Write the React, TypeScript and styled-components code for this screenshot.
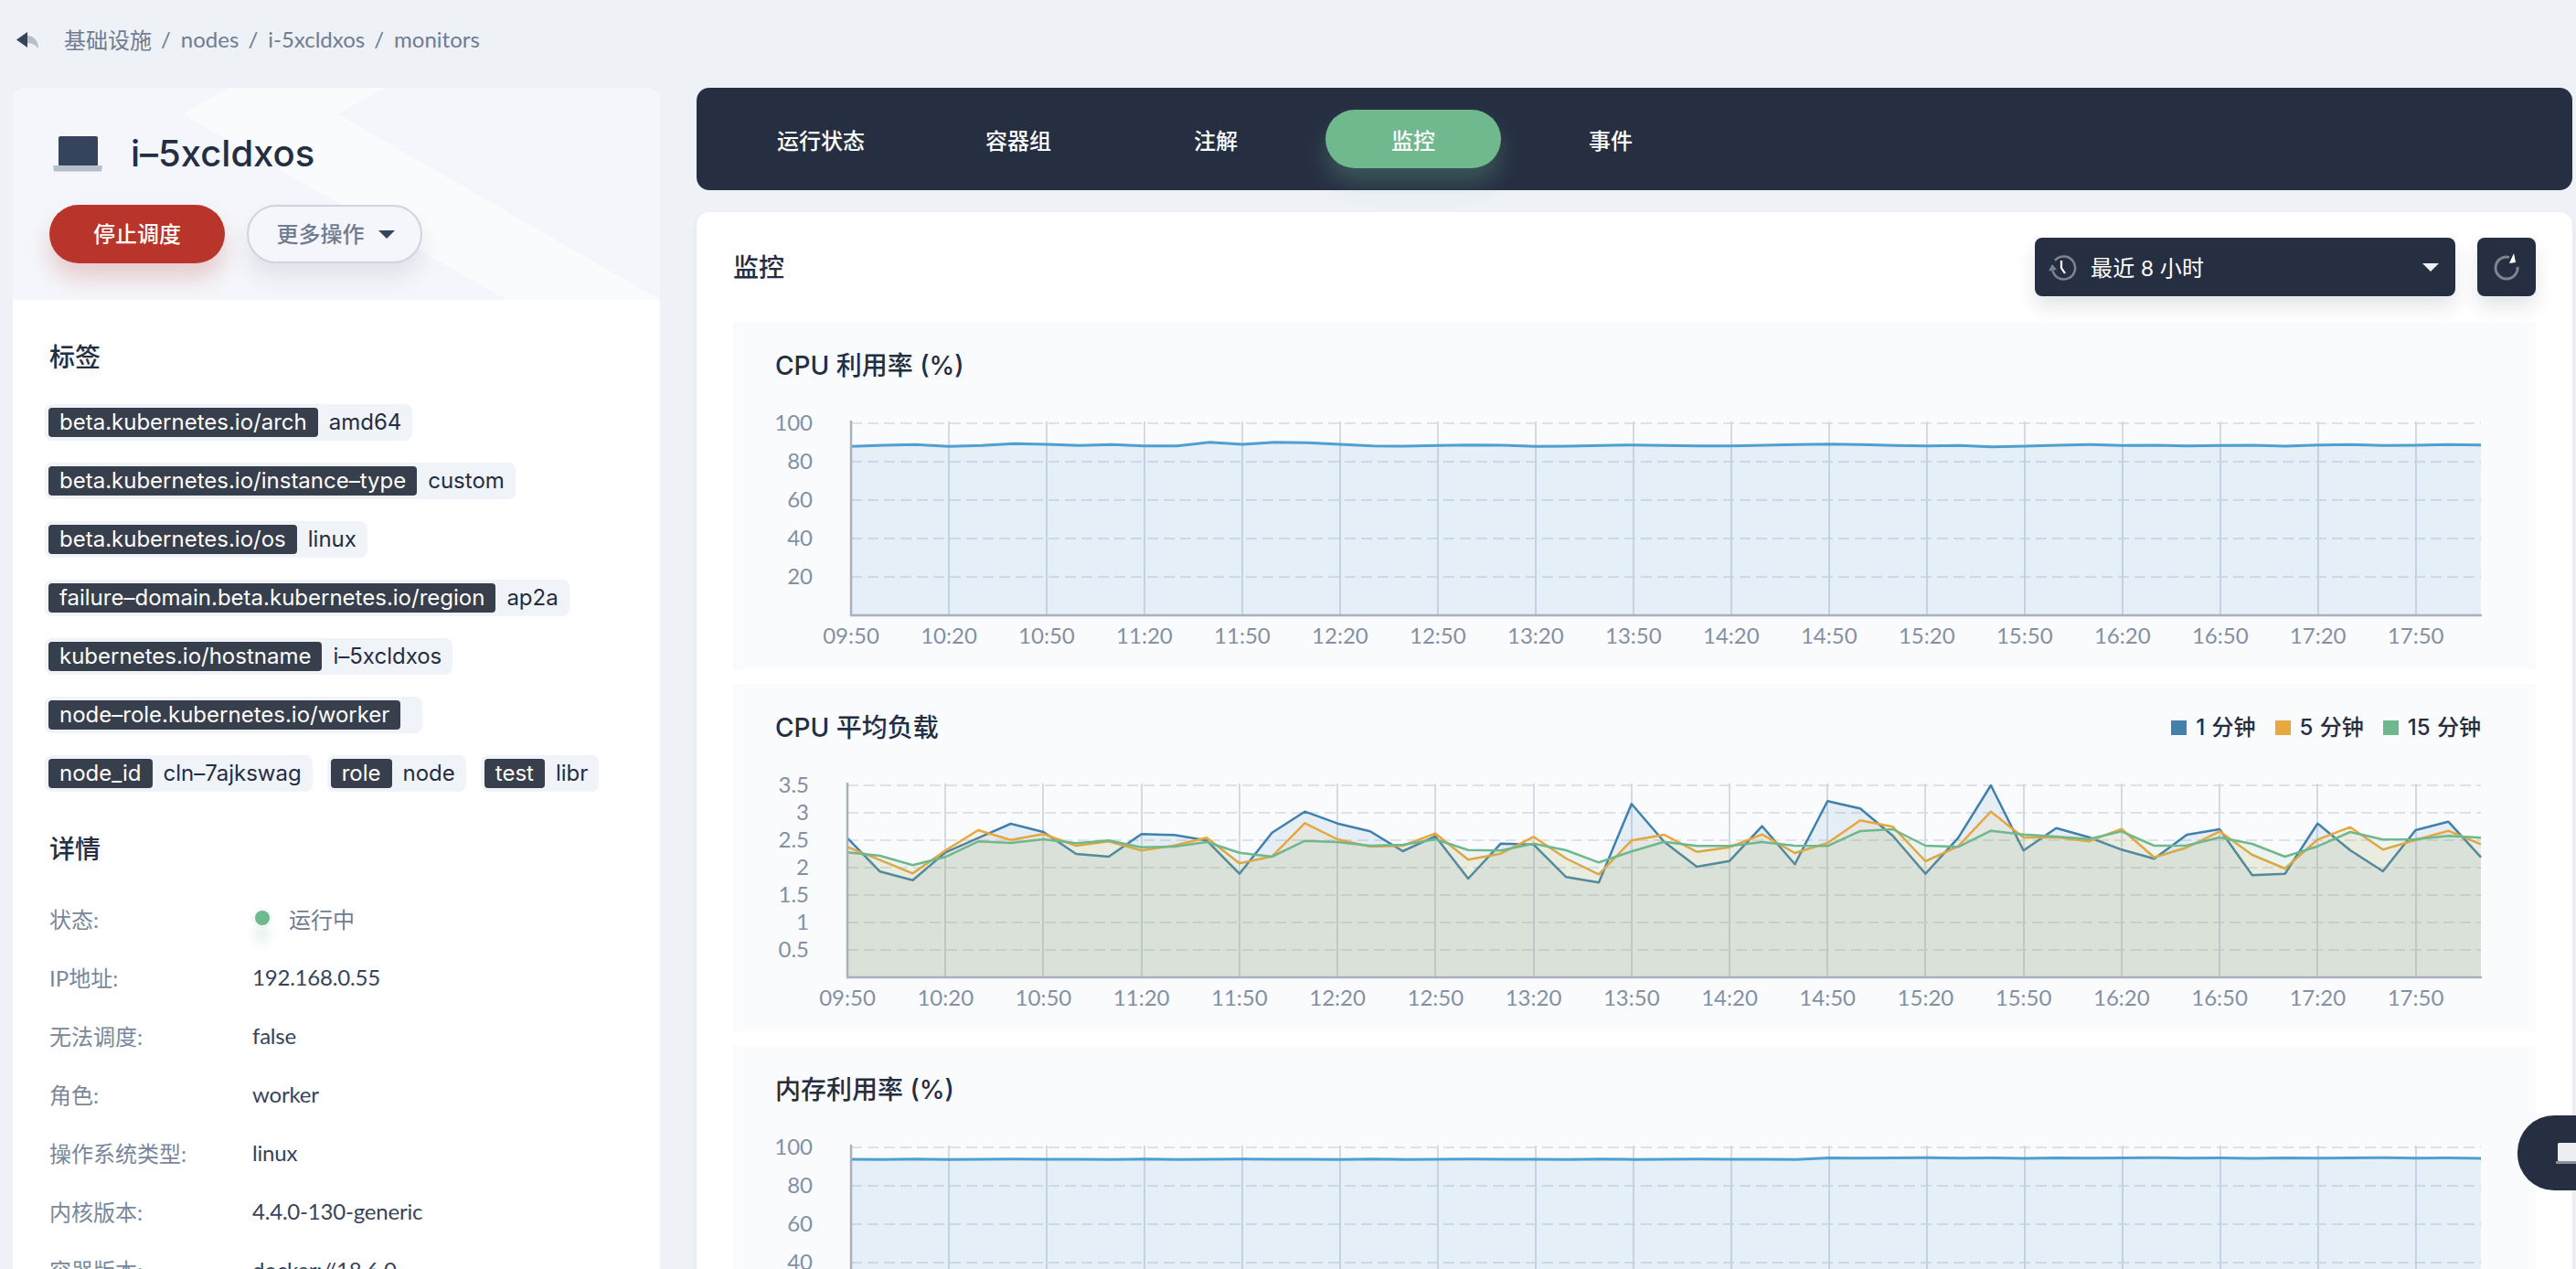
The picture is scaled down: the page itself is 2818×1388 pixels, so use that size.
import React from "react";
import styled, { createGlobalStyle } from "styled-components";

const CJK = `"Noto Sans CJK SC"`;
const BASE = `Lato, ${CJK}, sans-serif`;
const UI = `Inter, ${CJK}, sans-serif`;

const Global = createGlobalStyle`
  html, body { margin: 0; padding: 0; width: 2818px; height: 1388px; overflow: hidden; background: #eef1f6; }
  #root { width: 2818px; height: 1388px; overflow: hidden; }
  * { box-sizing: border-box; }
`;

const Page = styled.div`
  width: 2818px; height: 1388px; overflow: hidden; position: relative;
  font-family: ${BASE}; font-size: 24px; color: #242e42;
`;
const Crumbs = styled.div`
  height: 96px; padding: 0 0 11px 18px; display: flex; align-items: center;
  color: #6f7c92; font-size: 24px;
`;
const BackIcon = styled.svg`width: 24px; height: 18px; margin: 3px 28px 0 0; flex: none;`;
const CrumbSep = styled.span`margin: 0 11px 0 10px;`;
const Columns = styled.div`display: flex; gap: 40px; padding-left: 14px; align-items: flex-start;`;

const Side = styled.aside`width: 708px; flex: none; background: #fff; border-radius: 14px 14px 0 0; overflow: hidden;`;
const SideHead = styled.div`
  height: 232px; background: #f4f6fb; padding: 44px 0 0 40px; position: relative;
  &::before {
    content: ""; position: absolute; inset: 0; background: #fafbfd;
    clip-path: polygon(236px 0, 406px 0, 356px 29px, 708px 232px, 540px 232px, 186px 29px);
  }
  & > * { position: relative; }
`;
const TitleRow = styled.div`display: flex; align-items: center; height: 56px; margin-left: 3px;`;
const LaptopIcon = styled.svg`width: 56px; height: 56px; flex: none; margin-right: 30px;`;
const NodeName = styled.h1`margin: 0; font: 500 40px/56px ${UI}; color: #242e42;`;
const Actions = styled.div`display: flex; gap: 24px; margin-top: 28px;`;
const Pill = styled.button<{ $danger?: boolean }>`
  width: 192px; height: 64px; border-radius: 32px; font: 500 24px/1 ${BASE};
  display: flex; align-items: center; justify-content: center; gap: 15px;
  padding: ${(p) => (p.$danger ? "0" : "0 0 0 2px")};
  background: ${(p) => (p.$danger ? "#b9342a" : "#f4f6fb")};
  color: ${(p) => (p.$danger ? "#fff" : "#6f7c92")};
  border: ${(p) => (p.$danger ? "none" : "2px solid #cfd5de")};
  box-shadow: ${(p) => (p.$danger ? "0 16px 24px rgba(185,52,42,.22)" : "0 16px 24px rgba(36,46,66,.09)")};
`;
const Caret = styled.i<{ $color: string }>`
  width: 0; height: 0; display: block; flex: none;
  border-left: 9px solid transparent; border-right: 9px solid transparent;
  border-top: 9px solid ${(p) => p.$color};
`;
const SideBody = styled.div`padding: 42px 0 0 35px;`;
const SectionTitle = styled.h3<{ $gap?: number }>`
  margin: ${(p) => p.$gap ?? 0}px 0 0 5px; font: 500 28px/40px ${BASE}; color: #242e42;
  text-shadow: 0 4px 8px rgba(36,46,66,.08);
`;
const TagList = styled.div`display: flex; flex-direction: column; gap: 24px; margin-top: 32px;`;
const TagRow = styled.div`display: flex; gap: 16px;`;
const Tag = styled.div`
  display: flex; height: 40px; padding: 4px 0 4px 4px; background: #f0f3f8; border-radius: 8px;
  font: 400 24px/32px ${UI};
`;
const TagKey = styled.span`background: #373e4c; color: #fff; border-radius: 4px; padding: 0 12px;`;
const TagValue = styled.span`padding: 0 12px; color: #242e42; min-width: 24px;`;
const Details = styled.dl`margin: 24px 0 0 5px;`;
const DetailRow = styled.div`display: grid; grid-template-columns: 222px 1fr; height: 64px; align-items: center;`;
const DetailLabel = styled.dt`color: #79879c; font-size: 24px;`;
const DetailValue = styled.dd`margin: 0; color: #36435c; font-size: 24px; letter-spacing: -0.2px; display: flex; align-items: center;`;
const StatusDot = styled.i`
  display: block; width: 16px; height: 16px; border-radius: 50%; background: #6fb98f; margin: 0 21px 0 3px;
  box-shadow: 0 0 0 3px rgba(111,185,143,.08), 0 18px 12px rgba(111,185,143,.22);
`;
const StatusText = styled.span`color: #6f7c92; letter-spacing: 0;`;

const Main = styled.main`width: 2052px; flex: none;`;
const Nav = styled.nav`
  height: 112px; background: #262f42; border-radius: 14px; display: flex; gap: 24px; padding: 24px 0 24px 40px;
`;
const NavTab = styled.div<{ $active?: boolean }>`
  width: 192px; height: 64px; border-radius: 32px; display: flex; align-items: center; justify-content: center;
  color: #fff; font: 500 24px/1 ${BASE}; padding-top: 3px;
  background: ${(p) => (p.$active ? "#70b88e" : "transparent")};
  box-shadow: ${(p) => (p.$active ? "0 16px 24px rgba(112,184,142,.28)" : "none")};
`;
const Card = styled.section`
  margin-top: 24px; background: #fff; border-radius: 14px 14px 0 0; padding: 28px 40px 0;
  box-shadow: 0 4px 8px rgba(36,46,66,.06);
`;
const CardHead = styled.div`display: flex; align-items: center; height: 64px; margin-bottom: 28px;`;
const CardTitle = styled.h2`margin: 0 auto 0 0; font: 500 28px/40px ${BASE}; color: #242e42;`;
const Select = styled.div`
  width: 460px; height: 64px; border-radius: 8px; background: #262f42; color: #fff;
  display: flex; align-items: center; padding: 0 18px 0 14px; font-size: 24px;
  box-shadow: 0 12px 20px rgba(36,46,66,.12);
`;
const SelectText = styled.span`margin: 0 auto 2px 15px; letter-spacing: .3px;`;
const Refresh = styled.button`
  width: 64px; height: 64px; margin-left: 24px; border: 0; border-radius: 8px; background: #262f42; padding: 0;
  display: flex; align-items: center; justify-content: center;
  box-shadow: 0 12px 20px rgba(36,46,66,.12);
`;
const SmallIcon = styled.svg`width: 32px; height: 36px; flex: none;`;
const Panels = styled.div`display: flex; flex-direction: column; gap: 16px;`;
const Panel = styled.div`height: 380px; background: #fafbfd;`;
const PanelHead = styled.div`height: 96px; display: flex; align-items: center; justify-content: space-between; padding: 0 60px 0 46px;`;
const PanelTitle = styled.h4`margin: 0; font: 500 28px/40px ${UI}; color: #242e42;`;
const Legend = styled.div`display: flex; gap: 21px;`;
const LegendItem = styled.div`display: flex; align-items: center; gap: 10px; font: 500 24px/1 ${UI}; word-spacing: 1px; color: #242e42;`;
const Swatch = styled.i<{ $color: string }>`display: block; width: 17px; height: 16px; background: ${(p) => p.$color};`;
const ChartSvg = styled.svg`
  display: block; width: 1972px; height: 284px;
  text { font-family: ${BASE}; font-size: 24px; fill: #8390a4; }
`;
const Floating = styled.div`
  position: absolute; right: 0; top: 1220px; width: 64px; height: 82px; background: #262f42;
  border-radius: 40px 0 0 40px; padding: 30px 0 0 42px;
`;
const FloatIcon = styled.svg`width: 40px; height: 24px; display: block;`;

type Series = { color: string; ys: number[] };

const Chart = ({ left, gridStep, yLabels, series, strokeW }: { left: number; gridStep: number; yLabels: string[]; series: Series[]; strokeW: number }) => {
  const right = 1912, top = 111, bottom = 321;
  const x = (i: number) => left + ((right - left) * i) / 50;
  const hs: number[] = [];
  for (let y = top; y < bottom; y += gridStep) hs.push(y);
  const ticks = Array.from({ length: 17 }, (_, k) => k * 3);
  const label = (k: number) => {
    const m = 9 * 60 + 50 + k * 30;
    return `${String(Math.floor(m / 60)).padStart(2, "0")}:${String(m % 60).padStart(2, "0")}`;
  };
  return (
    <ChartSvg viewBox="0 96 1972 284">
      {hs.map((y) => <line key={y} x1={left} x2={right} y1={y} y2={y} stroke="#dde1e9" strokeWidth={2} strokeDasharray="12 6" />)}
      {ticks.slice(1).map((i) => <line key={i} x1={Math.round(x(i))} x2={Math.round(x(i))} y1={top - 2} y2={bottom} stroke="#d3dae4" strokeWidth={2} />)}
      {series.map((s) => {
        const pts = s.ys.map((y, i) => `${x(i).toFixed(1)},${y.toFixed(1)}`).join(" ");
        return (
          <g key={s.color}>
            <polygon points={`${left},${bottom} ${pts} ${right},${bottom}`} fill={s.color} fillOpacity={series.length === 1 ? 0.12 : 0.1} />
            <polyline points={pts} fill="none" stroke={s.color} strokeWidth={strokeW} strokeLinejoin="round" />
          </g>
        );
      })}
      <path d={`M${left} ${top - 3}V${bottom}H${right + 1}`} fill="none" stroke="#a9b1bd" strokeWidth={2.5} />
      {yLabels.map((t, i) => <text key={t} x={left - 42} y={top - 2 + gridStep * i} textAnchor="end" dominantBaseline="central">{t}</text>)}
      {ticks.map((i, k) => <text key={i} x={x(i)} y={342} textAnchor="middle" dominantBaseline="central">{label(k)}</text>)}
    </ChartSvg>
  );
};

const z1 = [205,201,199,205,202,196,198,202,199,203,203,191,198,191,193,198,203,204,202,200,201,205,204,202,200,202,203,203,201,199,197,199,202,203,202,206,204,201,199,202,201,203,202,201,204,200,199,202,201,199,200];
const cpu = z1.map((z) => 420 + z / 3 - 352);
const blueZ = [500,610,638,547,500,453,480,552,561,487,490,508,617,482,413,452,478,543,494,633,518,521,628,646,388,512,594,575,461,586,379,403,493,617,499,327,541,467,497,538,568,489,471,622,617,452,540,609,474,446,563];
const orangeZ = [529,572,616,541,474,506,487,525,511,541,524,499,583,560,451,504,528,525,485,571,551,496,567,619,508,489,545,530,488,549,516,442,463,576,527,413,498,497,511,470,563,531,478,555,600,505,464,538,506,476,520];
const greenZ = [547,558,589,562,511,516,504,517,508,530,528,513,548,561,509,513,525,522,504,539,541,518,540,580,544,512,526,526,513,525,526,477,471,525,529,476,488,495,503,478,525,524,498,519,561,527,480,505,504,493,499];
const toLoad = (a: number[]) => a.map((z) => 2 + z / 3);
const mem = Array.from({ length: 51 }, (_, i) => (i < 30 ? 124 : 122.6) + [0, 0.3, -0.2, 0.2, 0, -0.3, 0.1][i % 7]);

const labels: [string, string][] = [
  ["beta.kubernetes.io/arch", "amd64"],
  ["beta.kubernetes.io/instance–type", "custom"],
  ["beta.kubernetes.io/os", "linux"],
  ["failure–domain.beta.kubernetes.io/region", "ap2a"],
  ["kubernetes.io/hostname", "i–5xcldxos"],
  ["node–role.kubernetes.io/worker", ""],
];
const lastLabels: [string, string][] = [["node_id", "cln–7ajkswag"], ["role", "node"], ["test", "libr"]];
const info: [string, string][] = [
  ["IP地址:", "192.168.0.55"], ["无法调度:", "false"], ["角色:", "worker"],
  ["操作系统类型:", "linux"], ["内核版本:", "4.4.0-130-generic"], ["容器版本:", "docker://18.6.0"],
];
const tabs = ["运行状态", "容器组", "注解", "监控", "事件"];
const pct = ["100", "80", "60", "40", "20"];
const loads = ["3.5", "3", "2.5", "2", "1.5", "1", "0.5"];

export default function App() {
  return (
    <Page>
      <Global />
      <Crumbs>
        <BackIcon viewBox="0 0 24 18">
          <path d="M12 0 0 8.500 12 17Z" fill="#36435c" />
          <path d="M12 4C20 4 24 11 24 18 21 14 17 12 12 12Z" fill="#b6c0cb" />
        </BackIcon>
        基础设施<CrumbSep>/</CrumbSep>nodes<CrumbSep>/</CrumbSep>i-5xcldxos<CrumbSep>/</CrumbSep>monitors
      </Crumbs>
      <Columns>
        <Side>
          <SideHead>
            <TitleRow>
              <LaptopIcon viewBox="0 0 56 56">
                <rect x="7" y="9" width="43" height="33" rx="2" fill="#36435c" />
                <path d="M1 41H55L54 47.500H2Z" fill="#b6c0cb" />
              </LaptopIcon>
              <NodeName>i–5xcldxos</NodeName>
            </TitleRow>
            <Actions>
              <Pill $danger>停止调度</Pill>
              <Pill>更多操作<Caret $color="#36435c" /></Pill>
            </Actions>
          </SideHead>
          <SideBody>
            <SectionTitle>标签</SectionTitle>
            <TagList>
              {labels.map(([k, v]) => (
                <TagRow key={k}><Tag><TagKey>{k}</TagKey><TagValue>{v}</TagValue></Tag></TagRow>
              ))}
              <TagRow>
                {lastLabels.map(([k, v]) => <Tag key={k}><TagKey>{k}</TagKey><TagValue>{v}</TagValue></Tag>)}
              </TagRow>
            </TagList>
            <SectionTitle $gap={42}>详情</SectionTitle>
            <Details>
              <DetailRow>
                <DetailLabel>状态:</DetailLabel>
                <DetailValue><StatusDot /><StatusText>运行中</StatusText></DetailValue>
              </DetailRow>
              {info.map(([k, v]) => (
                <DetailRow key={k}><DetailLabel>{k}</DetailLabel><DetailValue>{v}</DetailValue></DetailRow>
              ))}
            </Details>
          </SideBody>
        </Side>
        <Main>
          <Nav>
            {tabs.map((t) => <NavTab key={t} $active={t === "监控"}>{t}</NavTab>)}
          </Nav>
          <Card>
            <CardHead>
              <CardTitle>监控</CardTitle>
              <Select>
                <SmallIcon viewBox="0 0 32 36">
                  <path d="M5.500 22A12.500 12.500 0 1 0 8 11" fill="none" stroke="#7d8390" strokeWidth="2.600" />
                  <path d="M1 22.500 5 15l5 6Z" fill="#7d8390" />
                  <path d="M15 11v8l4 6" fill="none" stroke="#fff" strokeWidth="2.200" />
                </SmallIcon>
                <SelectText>最近 8 小时</SelectText>
                <Caret $color="#eef0f3" />
              </Select>
              <Refresh aria-label="刷新">
                <SmallIcon viewBox="0 0 32 36">
                  <path d="M19 7.400A12 12 0 1 0 28 18" fill="none" stroke="#7f858f" strokeWidth="3" />
                  <path d="M24 3 26 13 19 14Z" fill="#fff" />
                </SmallIcon>
              </Refresh>
            </CardHead>
            <Panels>
              <Panel>
                <PanelHead><PanelTitle>CPU 利用率 (%)</PanelTitle></PanelHead>
                <Chart left={129} gridStep={42} yLabels={pct} strokeW={3} series={[{ color: "#4f9fd0", ys: cpu }]} />
              </Panel>
              <Panel>
                <PanelHead>
                  <PanelTitle>CPU 平均负载</PanelTitle>
                  <Legend>
                    <LegendItem><Swatch $color="#4481aa" />1 分钟</LegendItem>
                    <LegendItem><Swatch $color="#e9a73f" />5 分钟</LegendItem>
                    <LegendItem><Swatch $color="#6fb88d" />15 分钟</LegendItem>
                  </Legend>
                </PanelHead>
                <Chart left={125} gridStep={30} yLabels={loads} strokeW={2.500} series={[
                  { color: "#3f81ac", ys: toLoad(blueZ) },
                  { color: "#e8a63f", ys: toLoad(orangeZ) },
                  { color: "#6fb88d", ys: toLoad(greenZ) },
                ]} />
              </Panel>
              <Panel>
                <PanelHead><PanelTitle>内存利用率 (%)</PanelTitle></PanelHead>
                <Chart left={129} gridStep={42} yLabels={pct} strokeW={3} series={[{ color: "#4f9fd0", ys: mem }]} />
              </Panel>
            </Panels>
          </Card>
        </Main>
      </Columns>
      <Floating>
        <FloatIcon viewBox="0 0 40 24">
          <rect x="2" y="0" width="30" height="20" rx="1.500" fill="#eceef1" />
          <rect x="0" y="20" width="34" height="3" fill="#8b909a" />
        </FloatIcon>
      </Floating>
    </Page>
  );
}
